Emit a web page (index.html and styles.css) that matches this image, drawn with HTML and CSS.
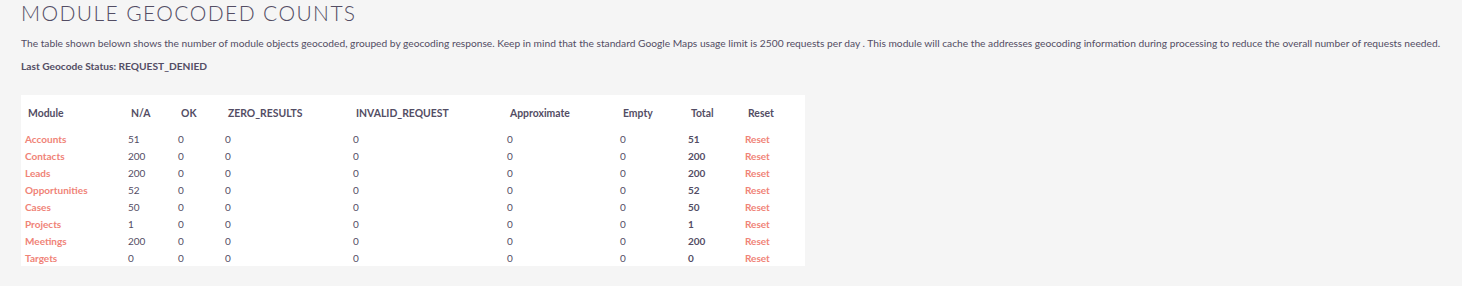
FILE: index.html
```html
<!DOCTYPE html>
<html>
<head>
<meta charset="utf-8">
<link rel="stylesheet" href="styles.css">
</head>
<body>
<div class="page">
  <h2 class="title">MODULE GEOCODED COUNTS</h2>
  <p class="desc">The table shown belown shows the number of module objects geocoded, grouped by geocoding response. Keep in mind that the standard Google Maps usage limit is 2500 requests per day . This module will cache the addresses geocoding information during processing to reduce the overall number of requests needed.</p>
  <p class="status">Last Geocode Status: REQUEST_DENIED</p>
  <table class="counts">
    <colgroup>
      <col class="c1"><col class="c2"><col class="c3"><col class="c4"><col class="c5"><col class="c6"><col class="c7"><col class="c8"><col class="c9">
    </colgroup>
    <thead>
      <tr><th>Module</th><th>N/A</th><th>OK</th><th>ZERO_RESULTS</th><th>INVALID_REQUEST</th><th>Approximate</th><th>Empty</th><th>Total</th><th>Reset</th></tr>
    </thead>
    <tbody>
      <tr><td><a class="mod">Accounts</a></td><td>51</td><td>0</td><td>0</td><td>0</td><td>0</td><td>0</td><td class="total">51</td><td><a class="reset">Reset</a></td></tr>
      <tr><td><a class="mod">Contacts</a></td><td>200</td><td>0</td><td>0</td><td>0</td><td>0</td><td>0</td><td class="total">200</td><td><a class="reset">Reset</a></td></tr>
      <tr><td><a class="mod">Leads</a></td><td>200</td><td>0</td><td>0</td><td>0</td><td>0</td><td>0</td><td class="total">200</td><td><a class="reset">Reset</a></td></tr>
      <tr><td><a class="mod">Opportunities</a></td><td>52</td><td>0</td><td>0</td><td>0</td><td>0</td><td>0</td><td class="total">52</td><td><a class="reset">Reset</a></td></tr>
      <tr><td><a class="mod">Cases</a></td><td>50</td><td>0</td><td>0</td><td>0</td><td>0</td><td>0</td><td class="total">50</td><td><a class="reset">Reset</a></td></tr>
      <tr><td><a class="mod">Projects</a></td><td>1</td><td>0</td><td>0</td><td>0</td><td>0</td><td>0</td><td class="total">1</td><td><a class="reset">Reset</a></td></tr>
      <tr><td><a class="mod">Meetings</a></td><td>200</td><td>0</td><td>0</td><td>0</td><td>0</td><td>0</td><td class="total">200</td><td><a class="reset">Reset</a></td></tr>
      <tr><td><a class="mod">Targets</a></td><td>0</td><td>0</td><td>0</td><td>0</td><td>0</td><td>0</td><td class="total">0</td><td><a class="reset">Reset</a></td></tr>
    </tbody>
  </table>
</div>
</body>
</html>
```
FILE: styles.css
```css
html, body {
  margin: 0;
  padding: 0;
  background: #f5f5f5;
}
body {
  font-family: Lato, "Open Sans", sans-serif;
  color: #534d64;
}
.page {
  padding: 0 21px;
}
.title {
  margin: 0;
  padding-top: 1px;
  font-size: 21px;
  line-height: 24px;
  font-weight: 300;
  letter-spacing: 1.4px;
  color: #534d64;
}
.desc {
  margin: 11px 0 0;
  font-size: 10.23px;
  line-height: 14px;
  white-space: nowrap;
}
.status {
  margin: 9px 0 0;
  font-size: 10.2px;
  line-height: 14px;
  font-weight: 700;
}
.counts {
  margin-top: 22px;
  background: #fff;
  border-collapse: collapse;
  table-layout: fixed;
  width: 784px;
}
.c1 { width: 103px; }
.c2 { width: 50px; }
.c3 { width: 47px; }
.c4 { width: 128px; }
.c5 { width: 154px; }
.c6 { width: 113px; }
.c7 { width: 68px; }
.c8 { width: 57px; }
.c9 { width: 64px; }
.counts th {
  text-align: left;
  font-size: 10.4px;
  font-weight: 700;
  height: 35px;
  padding: 0 0 0 7px;
  color: #534d64;
}
.counts td {
  font-size: 10px;
  height: 17px;
  padding: 0 0 0 4px;
  color: #534d64;
}
.counts td.total {
  font-weight: 700;
}
.mod, .reset {
  color: #f08377;
  font-weight: 700;
  text-decoration: none;
}
```
